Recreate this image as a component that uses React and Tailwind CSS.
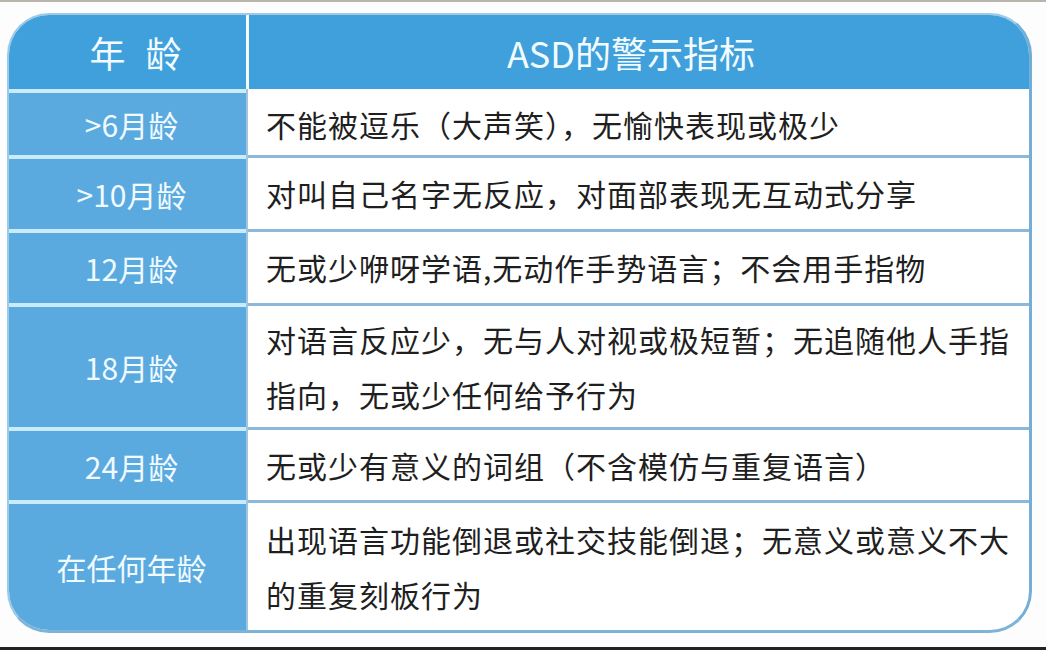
import React from "react";

const rows = [
  { label: ">6月龄", lines: ["不能被逗乐（大声笑），无愉快表现或极少"], h: "h-[66px]", first: true },
  { label: ">10月龄", lines: ["对叫自己名字无反应，对面部表现无互动式分享"], h: "h-[74px]" },
  { label: "12月龄", lines: ["无或少咿呀学语,无动作手势语言；不会用手指物"], h: "h-[74px]" },
  { label: "18月龄", lines: ["对语言反应少，无与人对视或极短暂；无追随他人手指", "指向，无或少任何给予行为"], h: "h-[124px]" },
  { label: "24月龄", lines: ["无或少有意义的词组（不含模仿与重复语言）"], h: "h-[73px]" },
  { label: "在任何年龄", lines: ["出现语言功能倒退或社交技能倒退；无意义或意义不大", "的重复刻板行为"], h: "flex-1" },
];

export default function App() {
  return (
    <div
      className="w-[1046px] h-[650px] bg-[#fdfdfd] flex flex-col overflow-hidden"
      style={{ fontFamily: '"Noto Sans CJK SC", "Noto Sans", sans-serif' }}
    >
      <div className="h-[2px] bg-[#b8b3ab]" />
      <div className="flex-1 pt-[11px] pl-[7px]">
        <div className="w-[1025px] h-[620px] rounded-[42px] overflow-hidden border-2 border-[#9ccbea] border-r-[3px] border-r-[#74aed6] border-b-[3px] border-b-[#7fb4d9] flex flex-col bg-white">
          <div className="h-[74px] flex bg-[#40a0dc] text-[#f2fbff]">
            <div className="w-[237px] flex items-center justify-center pl-[36px] text-[36px] tracking-[20px] leading-none">
              年龄
            </div>
            <div className="w-[3px] bg-[#f4fbff]" />
            <div className="flex-1 flex items-center justify-center pr-[16px] text-[36px] leading-none">
              ASD的警示指标
            </div>
          </div>
          {rows.map((r, i) => (
            <div key={i} className={`flex ${r.h}`}>
              <div className="w-[237px] border-t-4 border-[#c8ecf9] bg-[#5aaadf] flex items-center justify-center pl-[8px] text-[30px] text-[#f0faff] leading-none">
                {r.label}
              </div>
              <div className="w-[2px] bg-[#9fc6e0]" />
              <div
                className={`flex-1 flex flex-col justify-center pl-[18px] text-[30px] tracking-[1px] leading-[55px] text-[#1f1f1f] ${
                  r.first ? "border-t-4 border-white" : "border-t-[3px] border-[#8cb9d9]"
                }`}
              >
                {r.lines.map((l, j) => (
                  <div key={j} className="whitespace-nowrap">
                    {l}
                  </div>
                ))}
              </div>
            </div>
          ))}
        </div>
      </div>
      <div className="h-[14px]" />
      <div className="h-[3px] bg-[#232323]" />
    </div>
  );
}
